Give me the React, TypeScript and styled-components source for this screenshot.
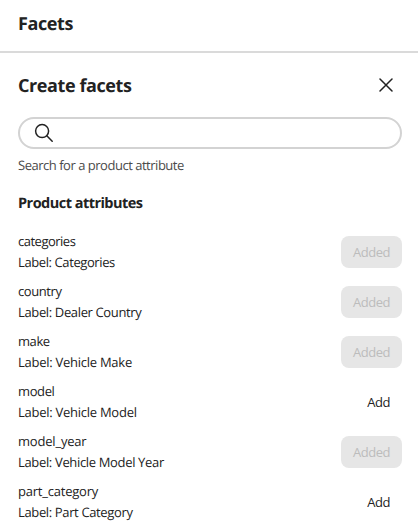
import React from 'react';
import styled, { createGlobalStyle } from 'styled-components';

const GlobalStyle = createGlobalStyle`
  * { box-sizing: border-box; }
  body {
    margin: 0;
    background: #fff;
    color: #222;
    font-family: "Open Sans", "Noto Sans", sans-serif;
    font-size: 13px;
    text-rendering: geometricPrecision;
    overflow: hidden;
  }
`;

const Page = styled.div`
  height: 531px;
  overflow: hidden;
`;

const TopBar = styled.header`
  height: 53px;
  padding: 8px 18px 0;
  border-bottom: 2px solid #dadada;
`;

const Title = styled.h1`
  margin: 0;
  padding-top: 2px;
  font-size: 18px;
  line-height: 28px;
  font-weight: 700;
  letter-spacing: -0.4px;
`;

const Panel = styled.main`
  padding: 18px 16px 0 18px;
`;

const PanelHeader = styled.div`
  display: flex;
  align-items: center;
  justify-content: space-between;
  height: 28px;
`;

const CloseButton = styled.button`
  display: flex;
  align-items: center;
  justify-content: center;
  width: 32px;
  height: 28px;
  padding: 0;
  border: 0;
  background: none;
  color: #222;
`;

const SearchBox = styled.label`
  display: flex;
  align-items: center;
  height: 32px;
  margin-top: 18px;
  padding: 0 14px;
  border: 2px solid #d3d3d3;
  border-radius: 16px;
`;

const SearchInput = styled.input`
  flex: 1;
  min-width: 0;
  margin-left: 8px;
  border: 0;
  outline: 0;
  background: none;
  font: inherit;
`;

const HelpText = styled.p`
  margin: 6px 0 0;
  line-height: 20px;
  color: #4b4b4b;
  letter-spacing: -0.48px;
`;

const SectionTitle = styled.h2`
  margin: 18px 0 0;
  font-size: 14.5px;
  line-height: 22px;
  font-weight: 700;
  letter-spacing: -0.53px;
`;

const List = styled.ul`
  margin: 12px 0 0;
  padding: 0;
  list-style: none;
`;

const Row = styled.li`
  display: flex;
  align-items: center;
  justify-content: space-between;
  height: 50px;
`;

const RowLine = styled.div<{ $tracking: number }>`
  line-height: 21px;
  letter-spacing: ${p => p.$tracking}px;
`;

const ActionButton = styled.button<{ $added: boolean }>`
  height: 32px;
  padding: 0 12px;
  border: 0;
  border-radius: 8px;
  background: ${p => (p.$added ? '#e6e6e6' : 'transparent')};
  color: ${p => (p.$added ? '#bcbcbc' : '#222')};
  font: inherit;
  letter-spacing: -0.48px;
  line-height: 32px;
`;

const attributes = [
  { name: 'categories', nameTracking: -0.5, label: 'Categories', labelTracking: -0.4, added: true },
  { name: 'country', nameTracking: -0.42, label: 'Dealer Country', labelTracking: -0.36, added: true },
  { name: 'make', nameTracking: -0.42, label: 'Vehicle Make', labelTracking: -0.26, added: true },
  { name: 'model', nameTracking: -0.38, label: 'Vehicle Model', labelTracking: -0.26, added: false },
  { name: 'model_year', nameTracking: -0.2, label: 'Vehicle Model Year', labelTracking: -0.34, added: true },
  { name: 'part_category', nameTracking: -0.22, label: 'Part Category', labelTracking: -0.36, added: false },
];

const CloseIcon = () => (
  <svg width="14" height="14" viewBox="0 0 14 14" fill="none" stroke="currentColor" strokeWidth="1.5" strokeLinecap="round">
    <path d="M1 1l12 12M13 1L1 13" />
  </svg>
);

const SearchIcon = () => (
  <svg width="20" height="20" viewBox="0 0 20 20" fill="none" stroke="#222" strokeWidth="1.5" strokeLinecap="round">
    <circle cx="8.1" cy="8.1" r="6.5" />
    <path d="M12.8 12.8L18.2 18.2" />
  </svg>
);

export default function App() {
  return (
    <Page>
      <GlobalStyle />
      <TopBar>
        <Title>Facets</Title>
      </TopBar>
      <Panel>
        <PanelHeader>
          <Title as="h2">Create facets</Title>
          <CloseButton aria-label="Close">
            <CloseIcon />
          </CloseButton>
        </PanelHeader>
        <SearchBox>
          <SearchIcon />
          <SearchInput type="text" aria-label="Search" />
        </SearchBox>
        <HelpText>Search for a product attribute</HelpText>
        <SectionTitle>Product attributes</SectionTitle>
        <List>
          {attributes.map(item => (
            <Row key={item.name}>
              <div>
                <RowLine $tracking={item.nameTracking}>{item.name}</RowLine>
                <RowLine $tracking={item.labelTracking}>Label: {item.label}</RowLine>
              </div>
              <ActionButton $added={item.added} disabled={item.added}>
                {item.added ? 'Added' : 'Add'}
              </ActionButton>
            </Row>
          ))}
        </List>
      </Panel>
    </Page>
  );
}
